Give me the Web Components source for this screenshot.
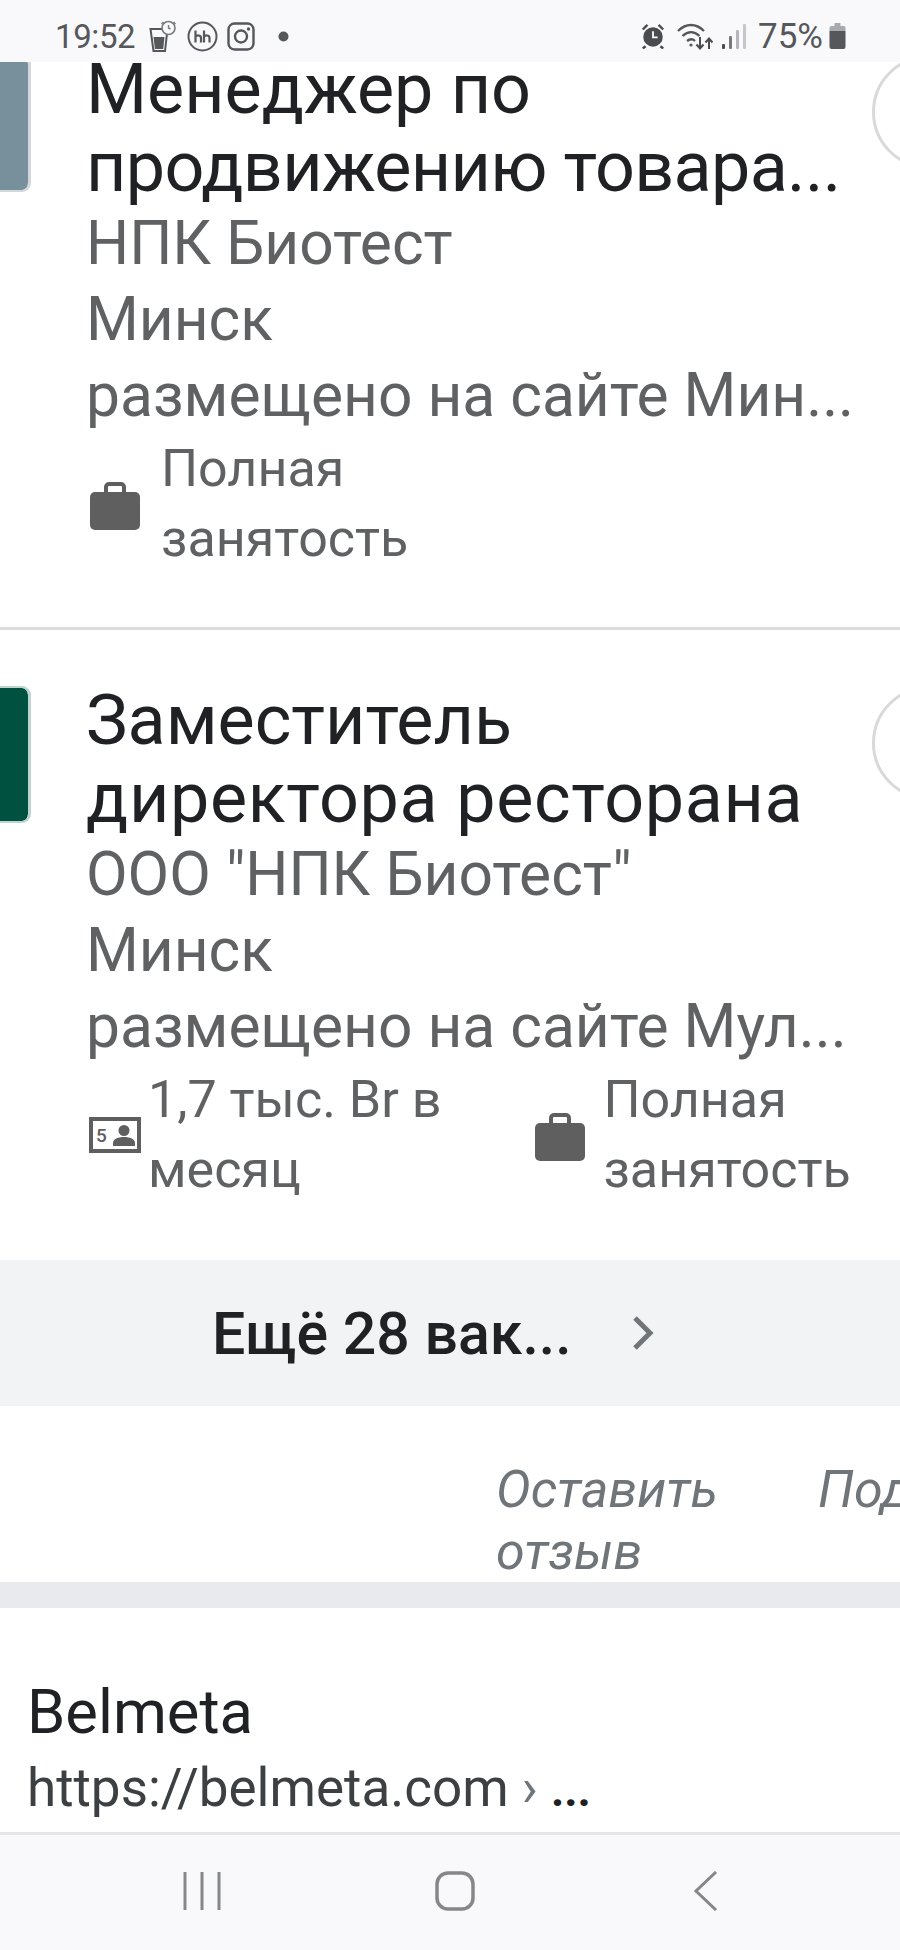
<!DOCTYPE html>
<html lang="ru">
<head>
<meta charset="utf-8">
<title>Вакансии</title>
<style>
  html, body { margin: 0; padding: 0; background: #fff; }
  body { width: 900px; height: 1950px; overflow: hidden; font-family: Roboto, "Liberation Sans", sans-serif; }
  .tight { letter-spacing: -0.65px; }
  .wide { letter-spacing: 0.65px; }
</style>
</head>
<body>
<phone-screen>
  <status-bar></status-bar>
  <job-card logo="#78909b" edge="#d3d7da" offset="-63">
    <span slot="title">Менеджер по<br><span class="tight">продвижению товара...</span></span>
    <span slot="company">НПК Биотест</span>
    <span slot="city">Минск</span>
    <span slot="source">размещено на сайте Мин...</span>
    <job-tag slot="tags" icon="case" gap="20">Полная<br>занятость</job-tag>
  </job-card>
  <job-card logo="#00513f" edge="#bcd5cf" last>
    <span slot="title">Заместитель<br><span class="wide">директора ресторана</span></span>
    <span slot="company">ООО "НПК Биотест"</span>
    <span slot="city">Минск</span>
    <span slot="source">размещено на сайте Мул...</span>
    <job-tag slot="tags" icon="pay" gap="7">1,7 тыс. Br в<br>месяц</job-tag>
    <job-tag slot="tags" icon="case" gap="17">Полная<br>занятость</job-tag>
  </job-card>
  <more-button>Ещё 28 вак...</more-button>
  <feedback-row></feedback-row>
  <result-head url="https://belmeta.com">Belmeta</result-head>
  <nav-bar></nav-bar>
</phone-screen>

<script>
class PhoneScreen extends HTMLElement {
  constructor() {
    super();
    this.attachShadow({ mode: 'open' });
    this.shadowRoot.innerHTML = `
      <style>
        :host { display: flex; flex-direction: column; width: 900px; height: 1950px; overflow: hidden; background: #fff; position: relative; }
      </style>
      <slot></slot>`;
  }
}

class StatusBar extends HTMLElement {
  constructor() {
    super();
    this.attachShadow({ mode: 'open' });
    this.shadowRoot.innerHTML = `
      <style>
        :host { display: flex; align-items: center; flex: none; height: 62px; box-sizing: border-box; padding: 10px 0 0 55px; background: #f9f9fc; color: #55575a; font: 400 33px Roboto, "Liberation Sans", sans-serif; position: relative; z-index: 2; letter-spacing: -0.4px; }
        svg { display: block; flex: none; }
        .left, .right { display: flex; align-items: center; }
        .right { margin-left: auto; padding-right: 53px; }
        .pct { font-size: 35px; letter-spacing: 0; }
      </style>
      <div class="left">
        <span>19:52</span>
        <svg style="margin-left:13px" width="31" height="34" viewBox="0 0 28 34">
          <path d="M1 10h17l-2.500 22H4z" fill="none" stroke="#55575a" stroke-width="2"/>
          <path d="M4 18h11l-1.300 12H5.400z" fill="#55575a"/>
          <circle cx="19" cy="9" r="6.500" fill="#f9f9fc" stroke="#77797c" stroke-width="1.600"/>
          <path d="M14 3l-2 2M24 3l2 2M19 6v3l2 1" fill="none" stroke="#77797c" stroke-width="1.400"/>
        </svg>
        <svg style="margin-left:8px" width="31" height="31" viewBox="0 0 31 31">
          <circle cx="15.500" cy="15.500" r="14" fill="none" stroke="#55575a" stroke-width="2"/>
          <path d="M8.500 9.500v12M8.500 16c1-2 5.500-2.400 5.500 1v4.500M17 9.500v12M17 16c1-2 5.500-2.400 5.500 1v4.500" fill="none" stroke="#55575a" stroke-width="2.200"/>
        </svg>
        <svg style="margin-left:9px" width="28" height="29" viewBox="0 0 28 29">
          <rect x="1.500" y="1.500" width="25" height="26" rx="6" fill="none" stroke="#55575a" stroke-width="2.400"/>
          <circle cx="14" cy="14.500" r="6" fill="none" stroke="#55575a" stroke-width="2.400"/>
          <circle cx="21.500" cy="7" r="1.700" fill="#55575a"/>
        </svg>
        <svg style="margin-left:23px" width="11" height="11" viewBox="0 0 11 11"><circle cx="5.500" cy="5.500" r="5" fill="#55575a"/></svg>
      </div>
      <div class="right">
        <svg width="26" height="26" viewBox="0 0 26 28">
          <circle cx="13" cy="15" r="10.500" fill="#4a4c4f"/>
          <path d="M13 9v6.500h5" fill="none" stroke="#f9f9fc" stroke-width="2"/>
          <path d="M2 7l5-5M24 7l-5-5M5 25l-3 2.500M21 25l3 2.500" stroke="#4a4c4f" stroke-width="2.600" fill="none"/>
        </svg>
        <svg style="margin-left:11px" width="36" height="28" viewBox="0 0 36 28">
          <path d="M1 9c8-8 18-8 26 0M5.500 14c5.500-5 11.500-5 17 0M10 19c3-2.500 5.500-2.500 8 0" fill="none" stroke="#55575a" stroke-width="2.300"/>
          <circle cx="14" cy="23" r="1.600" fill="#55575a"/>
          <path d="M23 15v11M19.500 22.500l3.500 4 3.500-4M32 27V17M28.500 20.500l3.500-4 3.500 4" fill="none" stroke="#4a4c4f" stroke-width="2"/>
        </svg>
        <svg style="margin-left:8px" width="26" height="27" viewBox="0 0 26 27">
          <rect x="1" y="21" width="3" height="5" rx="1" fill="#4a4c4f"/>
          <rect x="8" y="13" width="3" height="13" rx="1" fill="#77797c"/>
          <rect x="15" y="7" width="3" height="19" rx="1" fill="#b4b6b9"/>
          <rect x="22" y="1" width="3" height="25" rx="1" fill="#c4c6c9"/>
        </svg>
        <span class="pct" style="margin-left:11px">75%</span>
        <svg style="margin-left:5px" width="19" height="28" viewBox="0 0 18 28">
          <path d="M6 1h6v3H6z" fill="#a8aaad"/>
          <path d="M3 4h12a2 2 0 0 1 2 2v3H1V6a2 2 0 0 1 2-2z" fill="#a8aaad"/>
          <path d="M1 9h16v16a2 2 0 0 1-2 2H3a2 2 0 0 1-2-2z" fill="#55575a"/>
        </svg>
      </div>`;
  }
}

class JobCard extends HTMLElement {
  connectedCallback() {
    if (this.shadowRoot) return;
    this.attachShadow({ mode: 'open' });
    const logo = this.getAttribute('logo') || '#ccc';
    const edge = this.getAttribute('edge') || '#ddd';
    const offset = this.getAttribute('offset') || '0';
    this.shadowRoot.innerHTML = `
      <style>
        :host { display: block; flex: none; margin-top: ${offset}px; }
        :host([last]) .wrap { border-bottom: none; height: 630px; }
        .wrap { display: flex; height: 628px; border-bottom: 3px solid #dadce0; box-sizing: content-box; }
        .logo { flex: none; width: 31px; height: 137px; margin: 56px 55px 0 0; background: ${logo}; border-radius: 0 9px 9px 0; border: solid ${edge}; border-width: 2px 3px 2px 0; box-sizing: border-box; background-clip: padding-box; }
        .body { flex: none; width: 787px; padding-top: 51px; box-sizing: border-box; }
        .title { font-size: 70px; line-height: 78px; color: #202124; white-space: nowrap; }
        .line { font-size: 60.500px; line-height: 76px; color: #5f6163; white-space: nowrap; }
        .tags { display: flex; gap: 93px; margin-top: 0; padding-left: 3px; }
        .mark { flex: none; width: 114px; height: 114px; margin: 56px 0 0 -1px; border: 3px solid #d9d9d9; border-radius: 50%; box-sizing: border-box; }
      </style>
      <div class="wrap">
        <div class="logo"></div>
        <div class="body">
          <div class="title"><slot name="title"></slot></div>
          <div class="line"><slot name="company"></slot></div>
          <div class="line"><slot name="city"></slot></div>
          <div class="line"><slot name="source"></slot></div>
          <div class="tags"><slot name="tags"></slot></div>
        </div>
        <div class="mark"></div>
      </div>`;
  }
}

class JobTag extends HTMLElement {
  connectedCallback() {
    if (this.shadowRoot) return;
    this.attachShadow({ mode: 'open' });
    const icon = this.getAttribute('icon');
    const gap = this.getAttribute('gap') || 20;
    const paths = {
      case: `<svg width="52" height="49" viewBox="0 0 52 49"><path d="M17 12V5a3 3 0 0 1 3-3h12a3 3 0 0 1 3 3v7" fill="none" stroke="#5f5f5f" stroke-width="4"/><rect x="1" y="10" width="50" height="38" rx="5" fill="#5f5f5f"/></svg>`,
      pay: `<svg width="52" height="36" viewBox="0 0 52 36"><rect x="2" y="2" width="48" height="32" fill="#fff" stroke="#5f5f5f" stroke-width="4"/><text x="7" y="24.500" font-family="Roboto, sans-serif" font-size="19" font-weight="500" fill="#5f5f5f">5</text><circle cx="35" cy="13.500" r="5.500" fill="#5f5f5f"/><path d="M24 29v-3c0-4 5-6 11-6s11 2 11 6v3z" fill="#5f5f5f"/></svg>`
    };
    this.shadowRoot.innerHTML = `
      <style>
        :host { display: flex; align-items: center; color: #5f6163; font-size: 52px; line-height: 70px; white-space: nowrap; }
        :host([icon="case"]) svg { margin-top: 4px; }
        svg { display: block; flex: none; margin-right: ${gap}px; }
      </style>
      ${paths[icon] || ''}
      <div><slot></slot></div>`;
  }
}

class MoreButton extends HTMLElement {
  constructor() {
    super();
    this.attachShadow({ mode: 'open' });
    this.shadowRoot.innerHTML = `
      <style>
        :host { display: flex; align-items: center; flex: none; height: 146px; box-sizing: border-box; padding-left: 212px; background: #f1f3f4; color: #202124; font: 500 59px Roboto, "Liberation Sans", sans-serif; }
        svg { display: block; margin-left: 60px; }
      </style>
      <slot></slot>
      <svg width="22" height="34" viewBox="0 0 22 34"><path d="M3 2l15 15L3 32" fill="none" stroke="#70757a" stroke-width="5"/></svg>`;
  }
}

class FeedbackRow extends HTMLElement {
  constructor() {
    super();
    this.attachShadow({ mode: 'open' });
    this.shadowRoot.innerHTML = `
      <style>
        :host { display: block; flex: none; height: 202px; padding-top: 53px; box-sizing: border-box; border-bottom: 26px solid #e8eaed; overflow: hidden; font: italic 400 52px/62px Roboto, "Liberation Sans", sans-serif; color: #70757a; }
        .row { display: flex; padding-left: 496px; white-space: nowrap; }
        .row span + span { margin-left: 100px; }
      </style>
      <div class="row"><span>Оставить<br>отзыв</span><span>Поделиться</span></div>`;
  }
}

class ResultHead extends HTMLElement {
  connectedCallback() {
    if (this.shadowRoot) return;
    this.attachShadow({ mode: 'open' });
    this.shadowRoot.innerHTML = `
      <style>
        :host { display: block; flex: 1; padding: 66px 0 0 27px; overflow: hidden; font-family: Roboto, "Liberation Sans", sans-serif; }
        .name { font-size: 61.500px; line-height: 76px; color: #202124; }
        .url { font-size: 53px; line-height: 76px; color: #3c4043; white-space: nowrap; }
        .sep { color: #70757a; }
        .more { color: #202124; font-weight: 700; font-size: 46px; }
      </style>
      <div class="name"><slot></slot></div>
      <div class="url">${this.getAttribute('url')} <span class="sep">›</span> <span class="more">...</span></div>`;
  }
}

class NavBar extends HTMLElement {
  constructor() {
    super();
    this.attachShadow({ mode: 'open' });
    this.shadowRoot.innerHTML = `
      <style>
        :host { display: flex; flex: none; height: 118px; box-sizing: border-box; background: #f9f9fc; border-top: 3px solid #e6e6ea; padding: 36px 0 0 183px; }
        svg { display: block; flex: none; }
      </style>
      <svg width="38" height="40" viewBox="0 0 38 40"><path d="M2 1v38M19 1v38M36 1v38" stroke="#85878a" stroke-width="3" fill="none"/></svg>
      <svg style="margin-left:214px" width="40" height="40" viewBox="0 0 40 40"><rect x="2" y="2" width="36" height="36" rx="11" fill="none" stroke="#85878a" stroke-width="3.500"/></svg>
      <svg style="margin-left:218px" width="26" height="40" viewBox="0 0 26 40"><path d="M23 1L3 20l20 19" fill="none" stroke="#85878a" stroke-width="3"/></svg>`;
  }
}

customElements.define('phone-screen', PhoneScreen);
customElements.define('status-bar', StatusBar);
customElements.define('job-card', JobCard);
customElements.define('job-tag', JobTag);
customElements.define('more-button', MoreButton);
customElements.define('feedback-row', FeedbackRow);
customElements.define('result-head', ResultHead);
customElements.define('nav-bar', NavBar);
</script>
</body>
</html>
